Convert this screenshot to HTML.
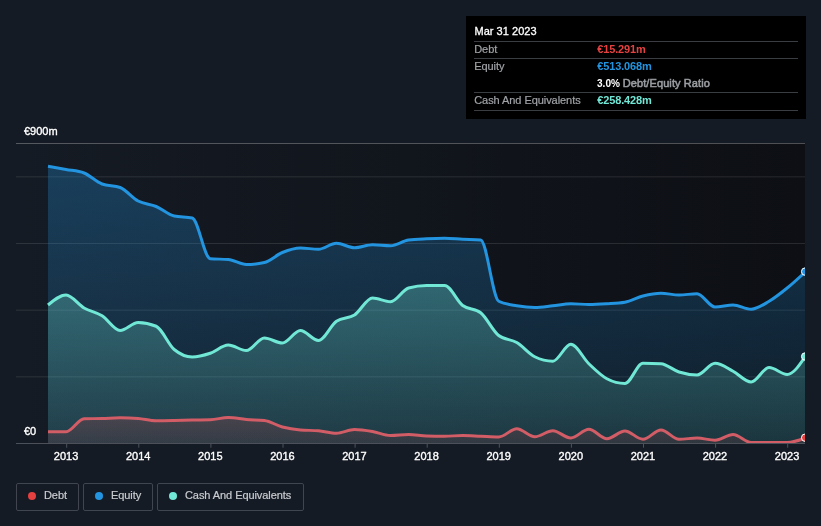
<!DOCTYPE html>
<html><head><meta charset="utf-8">
<style>
html,body{margin:0;padding:0;background:#151b24;}
body{width:821px;height:526px;overflow:hidden;position:relative;font-family:"Liberation Sans",sans-serif;}
svg{position:absolute;left:0;top:0;will-change:transform;}
.tt,.leg{will-change:transform;}
text{font-family:"Liberation Sans",sans-serif;}
.ax{font-size:11px;font-weight:normal;fill:#ffffff;stroke:#ffffff;stroke-width:0.35px;}
.tt{position:absolute;left:466px;top:16px;width:340px;height:103px;background:#000;}
.tt div{position:absolute;white-space:nowrap;font-size:11px;line-height:13px;}
.tt .sep{left:8px;width:324px;height:1px;background:#3a3d42;}
.lab{color:#a0a3a7;left:8.2px;letter-spacing:-0.06px;-webkit-text-stroke:0.2px #a0a3a7}
.val{left:131.2px;font-weight:bold;letter-spacing:-0.13px}
.leg{position:absolute;top:483px;height:28px;border:1px solid #40454f;border-radius:2px;box-sizing:border-box;}
.leg span{position:absolute;top:5px;font-size:11px;line-height:13px;color:#c9ccd0;white-space:nowrap;-webkit-text-stroke:0.2px #c9ccd0;letter-spacing:-0.07px;}
.leg i{position:absolute;top:7.5px;width:8px;height:8px;border-radius:50%;}
</style></head><body>
<svg width="821" height="526" viewBox="0 0 821 526">
<defs>
<linearGradient id="bg" x1="0" x2="1" y1="0" y2="0"><stop offset="0" stop-color="#151b24"/><stop offset="1" stop-color="#0d0f14"/></linearGradient>
<linearGradient id="ge" x1="0" x2="0" y1="166" y2="443" gradientUnits="userSpaceOnUse"><stop offset="0" stop-color="#2394df" stop-opacity="0.30"/><stop offset="1" stop-color="#2394df" stop-opacity="0.10"/></linearGradient>
<linearGradient id="gc" x1="0" x2="0" y1="285" y2="443" gradientUnits="userSpaceOnUse"><stop offset="0" stop-color="#71e7d6" stop-opacity="0.30"/><stop offset="1" stop-color="#71e7d6" stop-opacity="0.12"/></linearGradient>
<linearGradient id="gd" x1="0" x2="0" y1="417" y2="443" gradientUnits="userSpaceOnUse"><stop offset="0" stop-color="#e64141" stop-opacity="0.19"/><stop offset="1" stop-color="#e64141" stop-opacity="0.10"/></linearGradient>
<clipPath id="cp"><rect x="16" y="140" width="789" height="310"/></clipPath>
</defs>
<rect x="16" y="143" width="789" height="300.5" fill="url(#bg)"/>
<g stroke="#ffffff" stroke-width="1">
<line x1="16" x2="805" y1="143.5" y2="143.5" stroke-opacity="0.27"/>
<line x1="16" x2="805" y1="176.83" y2="176.83" stroke-opacity="0.11"/>
<line x1="16" x2="805" y1="243.5" y2="243.5" stroke-opacity="0.11"/>
<line x1="16" x2="805" y1="310.17" y2="310.17" stroke-opacity="0.11"/>
<line x1="16" x2="805" y1="376.83" y2="376.83" stroke-opacity="0.11"/>
</g>
<g clip-path="url(#cp)">
<path d="M48.00,166.25C54.01,167.31,60.02,168.38,66.03,169.50C72.04,170.62,78.05,170.67,84.06,173.00C90.07,175.33,96.08,181.67,102.09,184.00C108.10,186.33,114.10,185.17,120.11,187.50C126.12,189.83,132.13,197.83,138.14,201.00C144.15,204.17,150.16,204.00,156.17,206.50C162.18,209.00,168.19,214.67,174.20,216.00C180.21,217.33,186.22,216.67,192.23,218.00C198.24,219.33,204.25,258.25,210.26,258.75C216.27,259.25,222.28,259.00,228.29,259.50C234.30,260.00,240.30,264.50,246.31,264.50C252.32,264.50,258.33,263.83,264.34,262.50C270.35,261.17,276.36,254.92,282.37,252.50C288.38,250.08,294.39,248.00,300.40,248.00C306.41,248.00,312.42,249.25,318.43,249.25C324.44,249.25,330.45,243.25,336.46,243.25C342.47,243.25,348.48,247.75,354.49,247.75C360.50,247.75,366.50,244.75,372.51,244.75C378.52,244.75,384.53,245.75,390.54,245.75C396.55,245.75,402.56,240.83,408.57,240.00C414.58,239.17,420.59,239.04,426.60,238.75C432.61,238.46,438.62,238.25,444.63,238.25C450.64,238.25,456.65,238.96,462.66,239.25C468.67,239.54,474.68,239.50,480.69,240.00C486.70,240.50,492.70,298.25,498.71,301.25C504.72,304.25,510.73,304.71,516.74,305.75C522.75,306.79,528.76,307.50,534.77,307.50C540.78,307.50,546.79,306.38,552.80,305.75C558.81,305.12,564.82,303.75,570.83,303.75C576.84,303.75,582.85,304.50,588.86,304.50C594.87,304.50,600.88,304.12,606.89,303.75C612.90,303.38,618.90,303.25,624.91,302.25C630.92,301.25,636.93,297.50,642.94,296.00C648.95,294.50,654.96,293.25,660.97,293.25C666.98,293.25,672.99,295.00,679.00,295.00C685.01,295.00,691.02,293.75,697.03,293.75C703.04,293.75,709.05,307.00,715.06,307.00C721.07,307.00,727.08,305.00,733.09,305.00C739.10,305.00,745.10,309.25,751.11,309.25C757.12,309.25,763.13,304.79,769.14,301.25C775.15,297.71,781.16,292.88,787.17,288.00C793.18,283.12,799.19,277.56,805.20,272.00L805.20,443.5L48.00,443.5Z" fill="url(#ge)"/>
<path d="M48.00,305.00C54.01,300.00,60.02,295.00,66.03,295.00C72.04,295.00,78.05,304.54,84.06,308.00C90.07,311.46,96.08,312.00,102.09,315.75C108.10,319.50,114.10,330.50,120.11,330.50C126.12,330.50,132.13,322.50,138.14,322.50C144.15,322.50,150.16,323.75,156.17,326.25C162.18,328.75,168.19,344.50,174.20,349.50C180.21,354.50,186.22,357.00,192.23,357.00C198.24,357.00,204.25,355.25,210.26,353.25C216.27,351.25,222.28,345.00,228.29,345.00C234.30,345.00,240.30,350.50,246.31,350.50C252.32,350.50,258.33,338.00,264.34,338.00C270.35,338.00,276.36,343.00,282.37,343.00C288.38,343.00,294.39,330.50,300.40,330.50C306.41,330.50,312.42,340.50,318.43,340.50C324.44,340.50,330.45,325.42,336.46,321.25C342.47,317.08,348.48,318.88,354.49,315.00C360.50,311.12,366.50,298.00,372.51,298.00C378.52,298.00,384.53,301.75,390.54,301.75C396.55,301.75,402.56,289.67,408.57,288.00C414.58,286.33,420.59,285.50,426.60,285.50C432.61,285.50,438.62,285.50,444.63,285.50C450.64,285.50,456.65,300.96,462.66,305.50C468.67,310.04,474.68,307.92,480.69,312.75C486.70,317.58,492.70,330.83,498.71,335.50C504.72,340.17,510.73,338.96,516.74,342.50C522.75,346.04,528.76,353.75,534.77,356.75C540.78,359.75,546.79,361.25,552.80,361.25C558.81,361.25,564.82,344.25,570.83,344.25C576.84,344.25,582.85,358.00,588.86,363.75C594.87,369.50,600.88,375.58,606.89,378.75C612.90,381.92,618.90,383.50,624.91,383.50C630.92,383.50,636.93,363.25,642.94,363.25C648.95,363.25,654.96,363.42,660.97,363.75C666.98,364.08,672.99,370.12,679.00,372.00C685.01,373.88,691.02,375.00,697.03,375.00C703.04,375.00,709.05,363.25,715.06,363.25C721.07,363.25,727.08,368.12,733.09,371.25C739.10,374.38,745.10,382.00,751.11,382.00C757.12,382.00,763.13,367.50,769.14,367.50C775.15,367.50,781.16,374.50,787.17,374.50C793.18,374.50,799.19,365.50,805.20,356.50L805.20,443.5L48.00,443.5Z" fill="url(#gc)"/>
<path d="M48.00,431.75C54.01,431.75,60.02,431.75,66.03,431.75C72.04,431.75,78.05,418.92,84.06,418.75C90.07,418.58,96.08,418.67,102.09,418.50C108.10,418.33,114.10,417.75,120.11,417.75C126.12,417.75,132.13,418.00,138.14,418.50C144.15,419.00,150.16,420.75,156.17,420.75C162.18,420.75,168.19,420.62,174.20,420.50C180.21,420.38,186.22,420.12,192.23,420.00C198.24,419.88,204.25,419.92,210.26,419.75C216.27,419.58,222.28,417.50,228.29,417.50C234.30,417.50,240.30,419.00,246.31,419.50C252.32,420.00,258.33,419.83,264.34,420.50C270.35,421.17,276.36,425.42,282.37,427.00C288.38,428.58,294.39,429.50,300.40,430.00C306.41,430.50,312.42,430.25,318.43,430.75C324.44,431.25,330.45,433.25,336.46,433.25C342.47,433.25,348.48,429.50,354.49,429.50C360.50,429.50,366.50,430.50,372.51,431.50C378.52,432.50,384.53,435.50,390.54,435.50C396.55,435.50,402.56,434.50,408.57,434.50C414.58,434.50,420.59,435.83,426.60,436.00C432.61,436.17,438.62,436.25,444.63,436.25C450.64,436.25,456.65,435.50,462.66,435.50C468.67,435.50,474.68,436.00,480.69,436.25C486.70,436.50,492.70,437.00,498.71,437.00C504.72,437.00,510.73,428.75,516.74,428.75C522.75,428.75,528.76,436.75,534.77,436.75C540.78,436.75,546.79,430.75,552.80,430.75C558.81,430.75,564.82,438.00,570.83,438.00C576.84,438.00,582.85,429.25,588.86,429.25C594.87,429.25,600.88,438.75,606.89,438.75C612.90,438.75,618.90,431.00,624.91,431.00C630.92,431.00,636.93,439.25,642.94,439.25C648.95,439.25,654.96,430.00,660.97,430.00C666.98,430.00,672.99,439.25,679.00,439.25C685.01,439.25,691.02,438.00,697.03,438.00C703.04,438.00,709.05,440.25,715.06,440.25C721.07,440.25,727.08,434.50,733.09,434.50C739.10,434.50,745.10,442.50,751.11,442.50C757.12,442.50,763.13,442.50,769.14,442.50C775.15,442.50,781.16,442.50,787.17,442.50C793.18,442.50,799.19,440.25,805.20,438.00L805.20,443.5L48.00,443.5Z" fill="url(#gd)"/>
<path d="M48.00,166.25C54.01,167.31,60.02,168.38,66.03,169.50C72.04,170.62,78.05,170.67,84.06,173.00C90.07,175.33,96.08,181.67,102.09,184.00C108.10,186.33,114.10,185.17,120.11,187.50C126.12,189.83,132.13,197.83,138.14,201.00C144.15,204.17,150.16,204.00,156.17,206.50C162.18,209.00,168.19,214.67,174.20,216.00C180.21,217.33,186.22,216.67,192.23,218.00C198.24,219.33,204.25,258.25,210.26,258.75C216.27,259.25,222.28,259.00,228.29,259.50C234.30,260.00,240.30,264.50,246.31,264.50C252.32,264.50,258.33,263.83,264.34,262.50C270.35,261.17,276.36,254.92,282.37,252.50C288.38,250.08,294.39,248.00,300.40,248.00C306.41,248.00,312.42,249.25,318.43,249.25C324.44,249.25,330.45,243.25,336.46,243.25C342.47,243.25,348.48,247.75,354.49,247.75C360.50,247.75,366.50,244.75,372.51,244.75C378.52,244.75,384.53,245.75,390.54,245.75C396.55,245.75,402.56,240.83,408.57,240.00C414.58,239.17,420.59,239.04,426.60,238.75C432.61,238.46,438.62,238.25,444.63,238.25C450.64,238.25,456.65,238.96,462.66,239.25C468.67,239.54,474.68,239.50,480.69,240.00C486.70,240.50,492.70,298.25,498.71,301.25C504.72,304.25,510.73,304.71,516.74,305.75C522.75,306.79,528.76,307.50,534.77,307.50C540.78,307.50,546.79,306.38,552.80,305.75C558.81,305.12,564.82,303.75,570.83,303.75C576.84,303.75,582.85,304.50,588.86,304.50C594.87,304.50,600.88,304.12,606.89,303.75C612.90,303.38,618.90,303.25,624.91,302.25C630.92,301.25,636.93,297.50,642.94,296.00C648.95,294.50,654.96,293.25,660.97,293.25C666.98,293.25,672.99,295.00,679.00,295.00C685.01,295.00,691.02,293.75,697.03,293.75C703.04,293.75,709.05,307.00,715.06,307.00C721.07,307.00,727.08,305.00,733.09,305.00C739.10,305.00,745.10,309.25,751.11,309.25C757.12,309.25,763.13,304.79,769.14,301.25C775.15,297.71,781.16,292.88,787.17,288.00C793.18,283.12,799.19,277.56,805.20,272.00" fill="none" stroke="#2394df" stroke-width="3" stroke-linejoin="round" stroke-linecap="butt"/>
<path d="M48.00,305.00C54.01,300.00,60.02,295.00,66.03,295.00C72.04,295.00,78.05,304.54,84.06,308.00C90.07,311.46,96.08,312.00,102.09,315.75C108.10,319.50,114.10,330.50,120.11,330.50C126.12,330.50,132.13,322.50,138.14,322.50C144.15,322.50,150.16,323.75,156.17,326.25C162.18,328.75,168.19,344.50,174.20,349.50C180.21,354.50,186.22,357.00,192.23,357.00C198.24,357.00,204.25,355.25,210.26,353.25C216.27,351.25,222.28,345.00,228.29,345.00C234.30,345.00,240.30,350.50,246.31,350.50C252.32,350.50,258.33,338.00,264.34,338.00C270.35,338.00,276.36,343.00,282.37,343.00C288.38,343.00,294.39,330.50,300.40,330.50C306.41,330.50,312.42,340.50,318.43,340.50C324.44,340.50,330.45,325.42,336.46,321.25C342.47,317.08,348.48,318.88,354.49,315.00C360.50,311.12,366.50,298.00,372.51,298.00C378.52,298.00,384.53,301.75,390.54,301.75C396.55,301.75,402.56,289.67,408.57,288.00C414.58,286.33,420.59,285.50,426.60,285.50C432.61,285.50,438.62,285.50,444.63,285.50C450.64,285.50,456.65,300.96,462.66,305.50C468.67,310.04,474.68,307.92,480.69,312.75C486.70,317.58,492.70,330.83,498.71,335.50C504.72,340.17,510.73,338.96,516.74,342.50C522.75,346.04,528.76,353.75,534.77,356.75C540.78,359.75,546.79,361.25,552.80,361.25C558.81,361.25,564.82,344.25,570.83,344.25C576.84,344.25,582.85,358.00,588.86,363.75C594.87,369.50,600.88,375.58,606.89,378.75C612.90,381.92,618.90,383.50,624.91,383.50C630.92,383.50,636.93,363.25,642.94,363.25C648.95,363.25,654.96,363.42,660.97,363.75C666.98,364.08,672.99,370.12,679.00,372.00C685.01,373.88,691.02,375.00,697.03,375.00C703.04,375.00,709.05,363.25,715.06,363.25C721.07,363.25,727.08,368.12,733.09,371.25C739.10,374.38,745.10,382.00,751.11,382.00C757.12,382.00,763.13,367.50,769.14,367.50C775.15,367.50,781.16,374.50,787.17,374.50C793.18,374.50,799.19,365.50,805.20,356.50" fill="none" stroke="#71e7d6" stroke-width="3" stroke-linejoin="round" stroke-linecap="butt"/>
<path d="M48.00,431.75C54.01,431.75,60.02,431.75,66.03,431.75C72.04,431.75,78.05,418.92,84.06,418.75C90.07,418.58,96.08,418.67,102.09,418.50C108.10,418.33,114.10,417.75,120.11,417.75C126.12,417.75,132.13,418.00,138.14,418.50C144.15,419.00,150.16,420.75,156.17,420.75C162.18,420.75,168.19,420.62,174.20,420.50C180.21,420.38,186.22,420.12,192.23,420.00C198.24,419.88,204.25,419.92,210.26,419.75C216.27,419.58,222.28,417.50,228.29,417.50C234.30,417.50,240.30,419.00,246.31,419.50C252.32,420.00,258.33,419.83,264.34,420.50C270.35,421.17,276.36,425.42,282.37,427.00C288.38,428.58,294.39,429.50,300.40,430.00C306.41,430.50,312.42,430.25,318.43,430.75C324.44,431.25,330.45,433.25,336.46,433.25C342.47,433.25,348.48,429.50,354.49,429.50C360.50,429.50,366.50,430.50,372.51,431.50C378.52,432.50,384.53,435.50,390.54,435.50C396.55,435.50,402.56,434.50,408.57,434.50C414.58,434.50,420.59,435.83,426.60,436.00C432.61,436.17,438.62,436.25,444.63,436.25C450.64,436.25,456.65,435.50,462.66,435.50C468.67,435.50,474.68,436.00,480.69,436.25C486.70,436.50,492.70,437.00,498.71,437.00C504.72,437.00,510.73,428.75,516.74,428.75C522.75,428.75,528.76,436.75,534.77,436.75C540.78,436.75,546.79,430.75,552.80,430.75C558.81,430.75,564.82,438.00,570.83,438.00C576.84,438.00,582.85,429.25,588.86,429.25C594.87,429.25,600.88,438.75,606.89,438.75C612.90,438.75,618.90,431.00,624.91,431.00C630.92,431.00,636.93,439.25,642.94,439.25C648.95,439.25,654.96,430.00,660.97,430.00C666.98,430.00,672.99,439.25,679.00,439.25C685.01,439.25,691.02,438.00,697.03,438.00C703.04,438.00,709.05,440.25,715.06,440.25C721.07,440.25,727.08,434.50,733.09,434.50C739.10,434.50,745.10,442.50,751.11,442.50C757.12,442.50,763.13,442.50,769.14,442.50C775.15,442.50,781.16,442.50,787.17,442.50C793.18,442.50,799.19,440.25,805.20,438.00" fill="none" stroke="#d25d66" stroke-width="3" stroke-linejoin="round" stroke-linecap="butt"/>
<circle cx="805.2" cy="271.6" r="3.75" fill="#2394df" stroke="#fff" stroke-width="1"/>
<circle cx="805.2" cy="356.5" r="3.75" fill="#71e7d6" stroke="#fff" stroke-width="1"/>
<circle cx="805.2" cy="437.7" r="3.75" fill="#e64141" stroke="#fff" stroke-width="1"/>
</g>
<line x1="16" x2="805" y1="443.5" y2="443.5" stroke="#4b5059" stroke-width="1" shape-rendering="crispEdges"/>
<g stroke="#4d525b" stroke-width="1">
<line x1="66.7" x2="66.7" y1="444" y2="447.7"/>
<line x1="138.8" x2="138.8" y1="444" y2="447.7"/>
<line x1="210.9" x2="210.9" y1="444" y2="447.7"/>
<line x1="283.0" x2="283.0" y1="444" y2="447.7"/>
<line x1="355.1" x2="355.1" y1="444" y2="447.7"/>
<line x1="427.2" x2="427.2" y1="444" y2="447.7"/>
<line x1="499.3" x2="499.3" y1="444" y2="447.7"/>
<line x1="571.4" x2="571.4" y1="444" y2="447.7"/>
<line x1="643.5" x2="643.5" y1="444" y2="447.7"/>
<line x1="715.6" x2="715.6" y1="444" y2="447.7"/>
<line x1="787.7" x2="787.7" y1="444" y2="447.7"/>
</g>
<g class="ax" text-anchor="middle">
<text x="66.1" y="460.1">2013</text>
<text x="138.2" y="460.1">2014</text>
<text x="210.3" y="460.1">2015</text>
<text x="282.4" y="460.1">2016</text>
<text x="354.5" y="460.1">2017</text>
<text x="426.6" y="460.1">2018</text>
<text x="498.7" y="460.1">2019</text>
<text x="570.8" y="460.1">2020</text>
<text x="642.9" y="460.1">2021</text>
<text x="715.0" y="460.1">2022</text>
<text x="787.1" y="460.1">2023</text>
</g>
<g class="ax">
<text x="24" y="135.2">€900m</text>
<text x="24" y="434.8">€0</text>
</g>
</svg>
<div class="tt">
<div style="left:8.5px;top:8.5px;color:#fff;-webkit-text-stroke:0.3px #fff;letter-spacing:0.03px" id="t0">Mar 31 2023</div>
<div class="sep" style="top:25px"></div>
<div class="lab" style="top:26.5px" id="t1">Debt</div><div class="val" style="top:26.5px;color:#e64141" id="v1">€15.291m</div>
<div class="sep" style="top:42px"></div>
<div class="lab" style="top:43.5px" id="t2">Equity</div><div class="val" style="top:43.5px;color:#2394df" id="v2">€513.068m</div>
<div class="val" style="top:60.5px;color:#fff" id="v3"><span style="display:inline-block;letter-spacing:0;transform:scaleX(0.915);transform-origin:0 0">3.0%</span><span style="position:absolute;left:25.5px;top:0;color:#9a9da1;font-weight:normal;-webkit-text-stroke:0.55px #9a9da1;letter-spacing:0.1px">Debt/Equity Ratio</span></div>
<div class="sep" style="top:76px"></div>
<div class="lab" style="top:77.5px" id="t4">Cash And Equivalents</div><div class="val" style="top:77.5px;color:#71e7d6" id="v4">€258.428m</div>
<div class="sep" style="top:94px"></div>
</div>
<div class="leg" style="left:16px;width:63px;"><i style="left:11px;background:#e64141"></i><span style="left:27px">Debt</span></div>
<div class="leg" style="left:83px;width:70px;"><i style="left:11px;background:#2394df"></i><span style="left:27px">Equity</span></div>
<div class="leg" style="left:157px;width:147px;"><i style="left:11px;background:#71e7d6"></i><span style="left:27px">Cash And Equivalents</span></div>
</body></html>
